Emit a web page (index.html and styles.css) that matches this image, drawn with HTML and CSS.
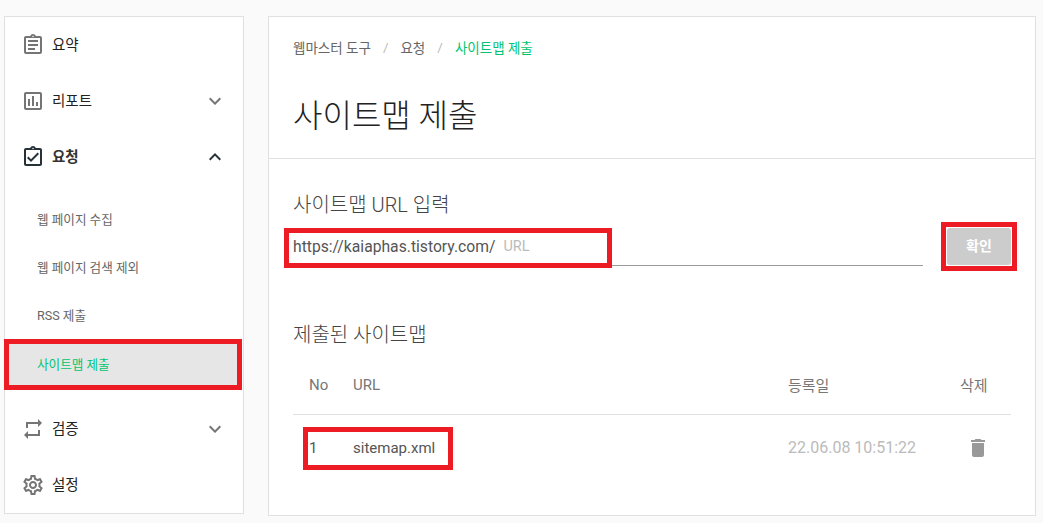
FILE: index.html
```html
<!DOCTYPE html>
<html lang="ko">
<head>
  <meta charset="UTF-8">
  <meta name="viewport" content="width=device-width, initial-scale=1.0">
  <title>사이트맵 제출</title>
  <link rel="stylesheet" href="styles.css">
</head>
<body>
  <div class="layout">
    <nav class="sidebar">
      <div class="nav-item">
        <svg class="nav-icon" viewBox="0 0 24 24"><path d="M19 3h-4.180C14.400 1.840 13.300 1 12 1s-2.400.84-2.820 2H5c-1.100 0-2 .9-2 2v14c0 1.100.9 2 2 2h14c1.100 0 2-.9 2-2V5c0-1.100-.9-2-2-2zm-7-.25c.41 0 .75.34.75.75s-.34.75-.75.75-.75-.34-.75-.75.34-.75.75-.75zM19 19H5V5h14v14zM7 7h10v2H7zm0 4h10v2H7zm0 4h7v2H7z"/></svg>
        <span>요약</span>
      </div>
      <div class="nav-item">
        <svg class="nav-icon" viewBox="0 0 24 24"><path d="M19 3H5c-1.100 0-2 .9-2 2v14c0 1.100.9 2 2 2h14c1.100 0 2-.9 2-2V5c0-1.100-.9-2-2-2zm0 16H5V5h14v14zM7 10h2v7H7zm4-3h2v10h-2zm4 6h2v4h-2z"/></svg>
        <span>리포트</span>
        <svg class="chevron" viewBox="0 0 24 24"><path d="M7.410 8.590 12 13.170l4.590-4.580L18 10l-6 6-6-6z"/></svg>
      </div>
      <div class="nav-item open">
        <svg class="nav-icon" viewBox="0 0 24 24"><path d="M19 3h-4.180C14.400 1.840 13.300 1 12 1s-2.400.84-2.820 2H5c-1.100 0-2 .9-2 2v14c0 1.100.9 2 2 2h14c1.100 0 2-.9 2-2V5c0-1.100-.9-2-2-2zm-7-.25c.41 0 .75.34.75.75s-.34.75-.75.75-.75-.34-.75-.75.34-.75.75-.75zM19 19H5V5h14v14zm-9-2-4-4 1.410-1.410L10 14.170l6.590-6.590L18 9z"/></svg>
        <span>요청</span>
        <svg class="chevron" viewBox="0 0 24 24"><path d="M12 8l-6 6 1.410 1.410L12 10.830l4.590 4.580L18 14z"/></svg>
      </div>
      <ul class="sub-list">
        <li class="sub-item">웹 페이지 수집</li>
        <li class="sub-item">웹 페이지 검색 제외</li>
        <li class="sub-item">RSS 제출</li>
        <li class="sub-item active">사이트맵 제출</li>
      </ul>
      <div class="nav-item">
        <svg class="nav-icon" viewBox="0 0 24 24"><path d="M7 7h10v3l4-4-4-4v3H5v6h2V7zm10 10H7v-3l-4 4 4 4v-3h12v-6h-2v4z"/></svg>
        <span>검증</span>
        <svg class="chevron" viewBox="0 0 24 24"><path d="M7.410 8.590 12 13.170l4.590-4.580L18 10l-6 6-6-6z"/></svg>
      </div>
      <div class="nav-item">
        <svg class="nav-icon" viewBox="0 0 24 24"><path d="M19.430 12.980c.04-.32.07-.64.07-.98s-.03-.66-.07-.98l2.110-1.650c.19-.15.24-.42.12-.64l-2-3.460c-.12-.22-.39-.3-.61-.22l-2.490 1c-.52-.4-1.080-.73-1.690-.98l-.38-2.650C14.460 2.180 14.250 2 14 2h-4c-.25 0-.46.18-.49.42l-.38 2.650c-.61.25-1.170.59-1.690.98l-2.490-1c-.23-.09-.49 0-.61.22l-2 3.460c-.13.22-.07.49.12.64l2.110 1.650c-.04.32-.07.65-.07.98s.03.66.07.98l-2.110 1.650c-.19.15-.24.42-.12.64l2 3.460c.12.22.39.3.61.22l2.490-1c.52.4 1.080.73 1.690.98l.38 2.650c.03.24.24.42.49.42h4c.25 0 .46-.18.49-.42l.38-2.650c.61-.25 1.170-.59 1.690-.98l2.490 1c.23.09.49 0 .61-.22l2-3.460c.12-.22.07-.49-.12-.64l-2.110-1.650zm-1.980-1.710c.04.31.05.52.05.73s-.02.43-.05.73l-.14 1.130.89.7 1.080.84-.7 1.210-1.270-.51-1.040-.42-.9.68c-.43.32-.84.56-1.250.73l-1.060.43-.16 1.130-.2 1.350h-1.400l-.19-1.350-.16-1.130-1.060-.43c-.43-.18-.83-.41-1.230-.71l-.91-.7-1.060.43-1.270.51-.7-1.210 1.080-.84.89-.7-.14-1.130c-.03-.31-.05-.54-.05-.74s.02-.43.05-.73l.14-1.130-.89-.7-1.080-.84.7-1.210 1.270.51 1.040.42.9-.68c.43-.32.84-.56 1.250-.73l1.060-.43.16-1.130.2-1.350h1.390l.19 1.350.16 1.130 1.060.43c.43.18.83.41 1.230.71l.91.7 1.060-.43 1.270-.51.7 1.210-1.070.85-.89.7.14 1.130zM12 8c-2.210 0-4 1.790-4 4s1.790 4 4 4 4-1.790 4-4-1.790-4-4-4zm0 6c-1.100 0-2-.9-2-2s.9-2 2-2 2 .9 2 2-.9 2-2 2z"/></svg>
        <span>설정</span>
      </div>
    </nav>

    <main class="content">
      <header class="page-head">
        <div class="breadcrumb">
          <span>웹마스터 도구</span>
          <span class="sep">/</span>
          <span>요청</span>
          <span class="sep">/</span>
          <span class="current">사이트맵 제출</span>
        </div>
        <h1>사이트맵 제출</h1>
      </header>

      <section class="section">
        <h2>사이트맵 URL 입력</h2>
        <div class="url-row">
          <div class="url-field">
            <div class="url-text mark">
              <span class="url-prefix">https://kaiaphas.tistory.com/</span>
              <span class="url-holder">URL</span>
            </div>
          </div>
          <div class="btn-wrap mark">
            <button class="btn">확인</button>
          </div>
        </div>
      </section>

      <section class="section submitted">
        <h2>제출된 사이트맵</h2>
        <div class="table-head">
          <span class="col-no">No</span>
          <span class="col-url">URL</span>
          <span class="col-date">등록일</span>
          <span class="col-del">삭제</span>
        </div>
        <div class="table-row">
          <div class="row-key mark">
            <span class="col-no">1</span>
            <span class="col-url">sitemap.xml</span>
          </div>
          <span class="col-date">22.06.08 10:51:22</span>
          <span class="col-del">
            <svg class="trash" viewBox="0 0 24 24"><path d="M6 19c0 1.100.9 2 2 2h8c1.100 0 2-.9 2-2V7H6v12zM19 4h-3.500l-1-1h-5l-1 1H5v2h14V4z"/></svg>
          </span>
        </div>
      </section>
    </main>
  </div>
</body>
</html>
```

FILE: styles.css
```css
* {
  box-sizing: border-box;
}
body {
  margin: 0;
  height: 523px;
  overflow: hidden;
  background-color: #fafafa;
  font-family: Roboto, 'Noto Sans CJK KR', sans-serif;
  color: #333;
}
h1, h2, ul {
  margin: 0;
  padding: 0;
  font-weight: 400;
}
.layout {
  display: flex;
  align-items: flex-start;
  gap: 24px;
  padding: 16px 7px 0 4px;
}

/* sidebar */
.sidebar {
  width: 240px;
  height: 498px;
  background-color: #fff;
  border: 1px solid #e0e0e0;
  flex: none;
}
.nav-item {
  display: flex;
  align-items: center;
  height: 56px;
  padding: 0 16px;
  font-size: 14.5px;
  color: #222;
}
.nav-item span {
  margin-left: 7px;
  padding-bottom: 4px;
  flex: 1;
}
.nav-item.open span {
  font-weight: 700;
  color: #333;
}
.nav-icon {
  width: 24px;
  height: 24px;
  fill: #757575;
  flex: none;
}
.nav-item.open .nav-icon {
  fill: #263238;
}
.chevron {
  width: 24px;
  height: 24px;
  fill: #757575;
  flex: none;
}
.nav-item.open .chevron {
  fill: #263238;
}
.sub-list {
  list-style: none;
  padding: 12px 0;
}
.sub-item {
  display: flex;
  align-items: center;
  height: 48px;
  padding: 0 0 5px 32px;
  font-size: 12.6px;
  color: #666;
}
.sub-item.active {
  height: 51px;
  margin: -2px 1px -1px -1px;
  padding: 0 0 3px 28px;
  color: #00c471;
  background-color: #e6e6e6;
  border: 5px solid #ed1c24;
}

/* main */
.content {
  flex: 1;
  height: 500px;
  background-color: #fff;
  border: 1px solid #e0e0e0;
}
.page-head {
  height: 142px;
  padding: 20px 24px 0;
  border-bottom: 1px solid #e0e0e0;
}
.breadcrumb {
  display: flex;
  align-items: center;
  height: 20px;
  font-size: 13.5px;
  color: #666;
}
.sep {
  margin: 0 12px;
  color: #bbb;
}
.current {
  color: #00c471;
}
h1 {
  margin-top: 36px;
  font-size: 32px;
  font-weight: 300;
  line-height: 46px;
  color: #222;
}
.section {
  padding: 0 24px;
}
h2 {
  font-size: 20px;
  font-weight: 300;
  line-height: 26px;
  color: #444;
}
.section:first-of-type h2 {
  margin-top: 33px;
}
.url-row {
  display: flex;
  align-items: flex-start;
  gap: 24px;
  margin-top: 10px;
}
.url-field {
  flex: 1;
  height: 38px;
  border-bottom: 1px solid #999;
}
.url-text {
  display: flex;
  align-items: center;
  gap: 8px;
  width: 318px;
  height: 30px;
  margin: 5px 0 0 -4px;
  padding: 0 0 4px 4px;
  font-size: 15.7px;
}
.url-prefix {
  color: #555;
}
.url-holder {
  color: #bbb;
  font-size: 14.5px;
}
.btn-wrap {
  width: 64px;
  height: 37px;
}
.btn {
  display: block;
  width: 100%;
  height: 100%;
  padding: 0 0 3px;
  border: none;
  border-radius: 3px;
  background-color: #ccc;
  color: #fff;
  font: 700 14px Roboto, 'Noto Sans CJK KR', sans-serif;
}
.mark {
  outline: 5px solid #ed1c24;
  outline-offset: 1px;
}
.url-text.mark {
  outline-offset: 0;
}
.submitted {
  margin-top: 56px;
}
.table-head, .table-row {
  display: flex;
  align-items: center;
  font-size: 15px;
}
.table-head {
  height: 58px;
  margin-top: 9px;
  padding: 0 0 2px 16px;
  border-bottom: 1px solid #e0e0e0;
  color: #777;
}
.table-row {
  height: 66px;
  color: #555;
}
.row-key {
  display: flex;
  align-items: center;
  width: 138px;
  height: 31px;
  margin-left: 16px;
}
.col-no {
  width: 44px;
  flex: none;
}
.col-url {
  flex: 1;
}
.table-head .col-url {
  flex: none;
  width: 435px;
}
.col-date {
  width: 172px;
  flex: none;
}
.table-row .col-date {
  margin-left: 341px;
  padding-bottom: 2px;
  font-size: 16px;
  color: #bbb;
}
.col-del {
  flex: none;
  display: flex;
}
.trash {
  width: 24px;
  height: 24px;
  fill: #999;
  margin-left: 6px;
}
```
